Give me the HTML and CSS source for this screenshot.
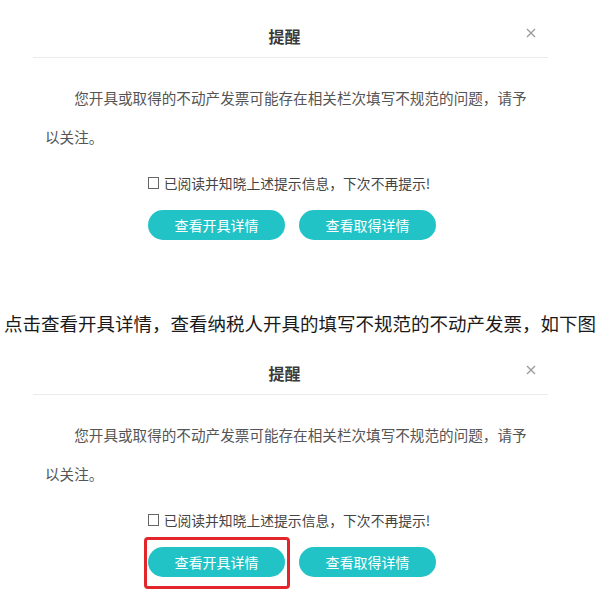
FILE: index.html
```html
<!DOCTYPE html>
<html lang="zh-CN">
<head>
    <meta charset="UTF-8">
    <meta name="viewport" content="width=device-width, initial-scale=1.0">
    <title>提醒</title>
    <link rel="stylesheet" href="styles.css">
</head>
<body>
    <div class="dialog">
        <div class="dialog-head">
            <div class="dialog-title">提醒</div>
            <div class="dialog-close">
                <svg width="10" height="10" viewBox="0 0 10 10"><path d="M1 1L9 9M9 1L1 9" stroke="#9a9a9a" stroke-width="1.3" fill="none"/></svg>
            </div>
        </div>
        <p class="dialog-text">您开具或取得的不动产发票可能存在相关栏次填写不规范的问题，请予以关注。</p>
        <label class="dialog-check"><span class="box"></span>已阅读并知晓上述提示信息，下次不再提示!</label>
        <div class="dialog-buttons">
            <div class="btn">查看开具详情</div>
            <div class="btn">查看取得详情</div>
        </div>
    </div>

    <p class="caption">点击查看开具详情，查看纳税人开具的填写不规范的不动产发票，如下图</p>

    <div class="dialog">
        <div class="dialog-head">
            <div class="dialog-title">提醒</div>
            <div class="dialog-close">
                <svg width="10" height="10" viewBox="0 0 10 10"><path d="M1 1L9 9M9 1L1 9" stroke="#9a9a9a" stroke-width="1.3" fill="none"/></svg>
            </div>
        </div>
        <p class="dialog-text">您开具或取得的不动产发票可能存在相关栏次填写不规范的问题，请予以关注。</p>
        <label class="dialog-check"><span class="box"></span>已阅读并知晓上述提示信息，下次不再提示!</label>
        <div class="dialog-buttons">
            <div class="btn marked">查看开具详情</div>
            <div class="btn">查看取得详情</div>
        </div>
    </div>
</body>
</html>
```

FILE: styles.css
```css
body {
    margin: 0;
    min-height: 610px;
    background: #fff;
    font-family: "Noto Sans CJK SC", "Noto Sans", sans-serif;
    color: #333;
}

.dialog {
    width: 600px;
    padding-bottom: 20px;
}

.dialog + .caption {
    margin-top: 49px;
}

.dialog-head {
    margin-left: 33px;
    width: 515px;
    box-sizing: border-box;
    padding: 24px 12px 9px 0;
    display: grid;
    grid-template-columns: 1fr auto 1fr;
    align-items: center;
    border-bottom: 1px solid #ebebeb;
}

.dialog-title {
    grid-column: 2;
    font-size: 16px;
    font-weight: bold;
    line-height: 24px;
    color: #3a3a3a;
}

.dialog-close {
    grid-column: 3;
    justify-self: end;
    display: flex;
    margin-top: -6px;
}

.dialog-text {
    margin: 20px 0 0 45px;
    width: 488px;
    font-size: 14.6px;
    line-height: 39px;
    text-indent: 2em;
    color: #555;
}

.dialog-check {
    margin-top: 17px;
    display: flex;
    justify-content: center;
    align-items: center;
    gap: 5px;
    font-size: 13.8px;
    line-height: 20px;
    color: #444;
    padding-right: 22px;
}

.box {
    width: 9px;
    height: 10px;
    border: 1px solid #666;
}

.dialog-buttons {
    margin-top: 17px;
    display: flex;
    justify-content: center;
    gap: 14px;
    padding-right: 16px;
}

.btn {
    position: relative;
    width: 137px;
    height: 30px;
    border-radius: 15px;
    background: #22c3c6;
    color: #fff;
    font-size: 14px;
    line-height: 30px;
    text-align: center;
}

.btn.marked::after {
    content: "";
    position: absolute;
    top: -10px;
    bottom: -12px;
    left: -4px;
    right: -5px;
    border: 3px solid #e3262b;
    border-radius: 4px;
}

.caption {
    margin: 0;
    font-size: 18.5px;
    line-height: 28px;
    text-align: center;
    color: #1a1a1a;
    white-space: nowrap;
}
```
